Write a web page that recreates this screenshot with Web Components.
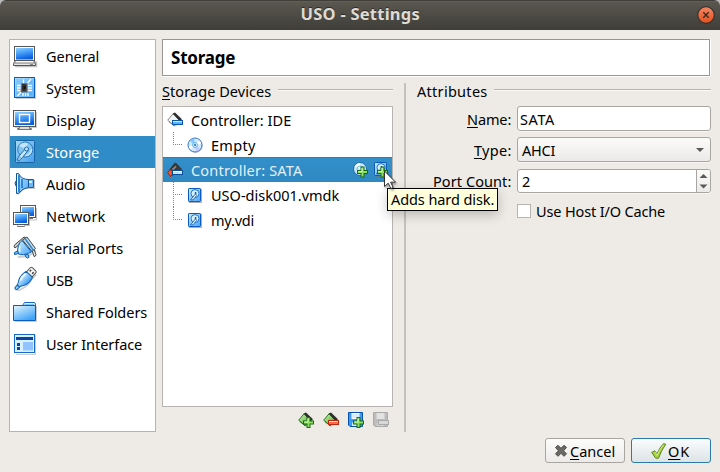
<!DOCTYPE html>
<html lang="en">
<head>
<meta charset="utf-8">
<title>USO - Settings</title>
<style>
html,body{margin:0;width:720px;height:472px;overflow:hidden}
body{background:#b9b9bb;font:14.5px "Noto Sans","Open Sans",sans-serif;color:#000}
</style>
</head>
<body>
<settings-window></settings-window>
<script>
const define = (name, html, connect) => {
  const t = document.createElement('template');
  t.innerHTML = html;
  customElements.define(name, class extends HTMLElement {
    constructor() { super(); this.attachShadow({mode: 'open'}).append(t.content.cloneNode(true)); }
    connectedCallback() { if (connect) connect.call(this, this.shadowRoot); }
  });
};

/* Shared pieces for the small icons */
const disk = (x, y, w, h) => `<rect x="${x+.5}" y="${y+.5}" width="${w-1}" height="${h-1}" rx=".6" fill="url(#sky)" stroke="#0c5cc0"/>`;
const plus = (x, y) => `<g transform="translate(${x} ${y})"><path d="M3.500 0h4v3.500h3.500v4H7.500V11h-4V7.500H0v-4h3.500z" fill="#176b12"/><path d="M4.500 1h2v3.500H10v2H6.500V10h-2V6.500H1v-2h3.500z" fill="#8fe060"/><path d="M5 1.500v3.500H1.500" fill="none" stroke="#e0ffc8"/></g>`;
const grads = `<defs>
<linearGradient id="scr" x2=".3" y2="1"><stop stop-color="#8fd0ff"/><stop offset=".45" stop-color="#4aa2f8"/><stop offset="1" stop-color="#0a5fe0"/></linearGradient>
<linearGradient id="sky" x2="1" y2="1"><stop stop-color="#c8ecff"/><stop offset="1" stop-color="#48a4f8"/></linearGradient>
<linearGradient id="fold" x2=".6" y2="1"><stop stop-color="#e6f8ff"/><stop offset="1" stop-color="#3fa4f7"/></linearGradient>
<linearGradient id="body" x2="1"><stop stop-color="#d9f3ff"/><stop offset="1" stop-color="#3b9cf3"/></linearGradient>
<linearGradient id="grn" x2="1" y2="1"><stop stop-color="#d0f8b0"/><stop offset="1" stop-color="#3f9b28"/></linearGradient></defs>`;
const card = (a, b) => `<path d="M1.500 10L8 15l7-6-6-4z" fill="#777" opacity=".35"/><path d="M.7 8.200L6 1.800 12.500 8.500 7 13.800z" fill="${a}" stroke="${b}"/><path d="M5.700 1.500L8 .5l7 6.800-2.300 2z" fill="#2e2e2e"/><path d="M2 9.500l5 3.800" stroke="${b}"/>`;
const bar = (y, s, f) => `<rect x="5.500" y="${y}" width="10" height="4" fill="${f}" stroke="${s}"/><path d="M6 ${y+1}h9" stroke="#fff" opacity=".75"/>`;
const smallHd = disk(1,1,13,14) + `<path d="M14.500 2v13.500H2" fill="none" stroke="#777" opacity=".6"/><circle cx="8" cy="6.600" r="4" fill="#d9f1ff" stroke="#2273c8"/><path d="M3.500 13L8.500 6.800l1.200 1.600-3.500 4.400z" fill="#e8f7ff" stroke="#1560b5" stroke-width=".9"/><circle cx="8.600" cy="6" r=".9" fill="#0750a5"/>`;
const ICONS = {
  general: [24, `<path d="M2.5 18h21v4.5H2" fill="none" stroke="#999" stroke-width="1.5" opacity=".6"/><rect x="1.5" y="2.5" width="20" height="14" fill="#fff" stroke="#555"/><rect x="3" y="4" width="17" height="11.5" fill="url(#scr)"/><path d="M2.5 16.5h18l2 3v2h-22v-2z" fill="#e8e8e8" stroke="#555"/><path d="M1 19h21" stroke="#777"/><path d="M3 17.7h17" stroke="#fff"/><path d="M17 20.5h3" stroke="#888"/>`],
  system: [24, `<path d="M3 22.500h19.500V3" stroke="#999" fill="none" opacity=".5"/><rect x="1.500" y="1.500" width="20" height="20" fill="url(#sky)" stroke="#0b5cc0"/><rect x="3" y="3" width="17" height="17" fill="#55abf8" fill-opacity=".5" stroke="#82caff" stroke-opacity=".7"/><g stroke="#fff" stroke-width="1.300"><path d="M4 9.500h4M4 12h4M4 14.500h4M15 9.500h4M15 12h4M15 14.500h4M10.500 3.500v4M10 17v3M12.500 17v3M15 17v3M14.500 7l3.500-4M8 16l-3.500 4"/></g><path d="M8.500 7.500h5.500v8.500H8z" fill="#333" stroke="#777"/><path d="M10.500 10h2v3h-2z" fill="#111"/>`],
  display: [24, `<path d="M2 19.500h21.500V4" fill="none" stroke="#999" opacity=".5"/><rect x=".500" y="2.500" width="22" height="16" fill="#f5f5f5" stroke="#555"/><rect x="2" y="4" width="19" height="13" fill="url(#scr)"/><rect x="6.500" y="6.500" width="10" height="8" fill="none" stroke="#fff" stroke-width="1.400"/><path d="M6.500 19v1.500h-2v1h14v-1h-2V19" fill="#ddd" stroke="#777"/>`],
  storage: [24, `<rect x="2.5" y=".5" width="19" height="22" rx="1" fill="url(#sky)" opacity=".8" stroke="#125b9c"/><circle cx="12.3" cy="9.500" r="7.600" fill="#83c4ef" stroke="#2b7bbd"/><path d="M6 6a7 7 0 0 1 9-2.500L12.500 9z" fill="#d3eefb" opacity=".8"/><path d="M18.500 9a6.500 6.500 0 0 1-6 6.500" fill="none" stroke="#c7e8fa" stroke-width="1.500"/><path d="M4 20l2-4 7-8 2 2.500-5.500 7L6 21z" fill="#c9e7f8" stroke="#1d6cac"/><circle cx="13.5" cy="9" r="2" fill="#c0e3f8" stroke="#1d6cac"/><circle cx="6.500" cy="18.500" r="1.500" fill="#a6d4f2" stroke="#3c86be" stroke-width=".6"/>`],
  audio: [24, `<path d="M5 22l6-6h10V8" fill="none" stroke="#999" stroke-width="2" opacity=".5"/><path d="M15 7.500h5.500v8H15z" fill="#6ab7f4" stroke="#185da3"/><path d="M3.500 1.500h2q3 6 10 6v8q-6 .5-10 6h-2z" fill="url(#sky)" stroke="#175695"/><path d="M6 3v17M9 7v9" stroke="#2f86d5" stroke-width="2"/><path d="M4.500 3v17" stroke="#d9f3ff"/><path d="M3 9q-2 2 0 5" fill="#5eb4f5" stroke="#175695"/><path d="M16 10h3" stroke="#d4f0ff" stroke-width="2"/>`],
  network: [24, `<path d="M9 16h14.500V4" fill="none" stroke="#999" opacity=".6"/><rect x="7.500" y="1.500" width="15" height="12" fill="#fff" stroke="#555"/><rect x="9" y="3" width="12" height="9" fill="url(#scr)"/><path d="M12 14.500h8" stroke="#777"/><rect x=".500" y="8.500" width="15" height="12" fill="#fff" stroke="#555"/><rect x="2" y="10" width="12" height="9" fill="url(#scr)"/><path d="M4.500 21.500v1h7v-1" fill="#eee" stroke="#777"/><path d="M16.500 10v11.500H12" fill="none" stroke="#999" opacity=".6"/>`],
  serial: [24, `<path d="M5 21l10-1 8-5" stroke="#999" fill="none" stroke-width="2" opacity=".5"/><path d="M1.500 9q-1 2 .5 3l11-9q0-2-2-2z" fill="#ccc" stroke="#444"/><path d="M19 14l2-.5 2 5q0 2-2 2z" fill="#eee" stroke="#444"/><path d="M9.500 4L14 1l8.500 11.500-3.500 3z" fill="#b8ddf4" stroke="#444"/><path d="M9 4.500q-5 4-4.500 13 5 3 14-1.500z" fill="url(#sky)" stroke="#105fb0"/><path d="M4.500 15l-3 1.500v2l4-1zM12 19l3-.7 1 3q-1.500 1.500-3 0z" fill="#74c1fb" stroke="#105fb0"/><path d="M12 2.500l8.500 12" stroke="#3f81b8" stroke-width="1.500"/><path d="M7 10q-1 3 0 6" stroke="#ecfaff" stroke-width="1.500" fill="none"/>`],
  usb: [24, `<path d="M5 22.500q11-4 14-12l4-4" stroke="#888" stroke-width="2" fill="none" opacity=".4"/><g transform="translate(11.500 11.500) rotate(43)"><path d="M-3.800-7v-5.500q0-1.500 1.500-1.500h4.600q1.500 0 1.500 1.500V-7z" fill="#f2f2f2" stroke="#555"/><path d="M-1.700-11.500v2M1.700-11.500v2" stroke="#333" stroke-width="1.400"/><path d="M-4.500-7h9q1.700 7-.8 11.500-1.700 2.500-2.200 4.500h-3q-.5-2-2.200-4.500-2.500-4.500-.8-11.500z" fill="url(#body)" stroke="#1463b3"/><path d="M-1.500 9h3v3.500q-1.500 1.500-3 0z" fill="#8fd0ff" stroke="#1463b3"/><path d="M-3-5q-1 5 .8 8.500" fill="none" stroke="#f4fcff" stroke-width="1.500"/></g>`],
  folder: [24, `<path d="M2 21.500h21.500V6" stroke="#999" fill="none" opacity=".5"/><path d="M9.500 5.500l2-3h10l1 1.500v4h-13z" fill="#d6f0ff" stroke="#1768c4"/><path d="M.5 5.500h22v15H.5z" fill="url(#fold)" stroke="#0d5cb8"/><path d="M11.500 4.500H21" stroke="#7ec4f5"/>`],
  ui: [24, `<path d="M3 22.500h19.500V3" stroke="#999" fill="none" opacity=".5"/><rect x="1.500" y="2.500" width="20" height="18" fill="#d9f0ff" stroke="#1768c8"/><path d="M3 5h17v3H3z" fill="#0a43a0"/><path d="M4 11h3v3H4zM4 15h3v3H4z" fill="#0a43a0"/><path d="M10 10h10v8.500H10z" fill="#91c4ff"/>`],
  ide: [16, card('#f3f3f3', '#8a8a8a') + bar(8.500, '#0c55ad', '#59b5fa')],
  sata: [16, `<path d="M2 8L7.500.8h1.500l6 6.200-2 3-8 4z" fill="#3c3c3c"/><path d="M4.500 6.500L8.500 3l2 2-5 5z" fill="#808080" stroke="#222"/><path d="M.7 10.500q1.500-3.500 4.500-2.500v4.500l-1.700 2z" fill="#f45a35" stroke="#a91b0b"/>` + bar(8.500, '#0c4c98', '#b9e4ff')],
  disc: [16, `<circle cx="8.7" cy="8.900" r="7" fill="#999" opacity=".5"/><circle cx="8" cy="8" r="7" fill="#cfeaff" stroke="#3674c8"/><path d="M8 8L3 4a6.500 6.500 0 0 1 4-2.500z" fill="#7fc9ff"/><path d="M8 8l5 4a6.500 6.500 0 0 1-4 2.500z" fill="#c3c4ff"/><path d="M8 8l4.500-4.500A6 6 0 0 1 14 7z" fill="#fff"/><path d="M8 8l-4.500 4.500A6 6 0 0 1 2 9z" fill="#fff"/><circle cx="8" cy="8" r="2.400" fill="#eaf6ff" stroke="#5aaee8"/><circle cx="8" cy="8" r=".9" fill="#075baa"/>`],
  hd: [16, smallHd],
  adddisc: [16, `<circle cx="7" cy="7" r="6.500" fill="#c8e9fb" stroke="#1c6aaf"/><path d="M7 7L2 4.500A6 6 0 0 1 7 1z" fill="#fff"/><circle cx="7" cy="7" r="3" fill="none" stroke="#67b7e7"/>` + plus(4, 4.500)],
  addhd: [16, `<g transform="translate(0 -1)">${smallHd}</g>` + plus(4, 4.500)],
  addctl: [16, card('url(#grn)', '#28751d') + plus(5, 5)],
  remctl: [16, card('url(#grn)', '#28751d') + bar(8.500, '#b92a13', '#ff6b48')],
  addatt: [16, `<path d="M.5.5h14v14H2l-1.500-1.500z" fill="#3a9af2" stroke="#0750aa"/><path d="M3.500 1h8v6h-8z" fill="#fff"/><path d="M4 10.500h7V14H4z" fill="#dcecff"/><path d="M4 3h7M4 5h7" stroke="#b9d9f4"/>` + plus(5, 5)],
  rematt: [16, `<path d="M.5.5h14v14H2l-1.500-1.500z" fill="#bcbcbc" stroke="#aaa"/><path d="M3.500 1h8v6h-8z" fill="#e2e2e2"/><path d="M4 10.500h7V14H4z" fill="#d4d4d4"/><rect x="5.500" y="8.500" width="10" height="4" fill="#d8d8d8" stroke="#aaa"/>`],
  cancel: [16, `<path d="M2.500 4.500L5 2.300l3 3 3-3 2.500 2.200-3 3.300 3 3-2.500 2.500-3-3-3 3-2.500-2.500 3-3z" fill="#6a6a66" stroke="#4b4b48" stroke-linejoin="round"/>`],
  ok: [16, `<path d="M.7 9.500l3-1.700 2.300 3Q8.500 4.500 12.500.7l2.300.5Q10.500 7 7.500 15.200H4.700z" fill="#a5d13f" stroke="#5f8626" stroke-linejoin="round"/><path d="M4 9l2 3.500Q8.500 6 12.500 2" fill="none" stroke="#cdec79"/>`]
};

define('px-icon', `<style>:host{display:block;flex:none}svg{display:block;overflow:visible}</style>`, function (root) {
  const [s, body] = ICONS[this.getAttribute('name')];
  root.innerHTML += `<svg width="${s}" height="${s}" viewBox="0 0 ${s} ${s}">${grads}${body}</svg>`;
});

/* Label that spaces its letters evenly over the width given in "w" */
define('fit-text', `<style>:host{display:block;white-space:nowrap;flex:none;line-height:20px}span{display:inline-block}::slotted(u){text-decoration:underline;text-decoration-thickness:1px;text-underline-offset:2px;text-decoration-skip-ink:none}</style><span><slot></slot></span>`, function (root) {
  const w = +this.getAttribute('w'), span = root.querySelector('span');
  const natural = span.getBoundingClientRect().width, n = this.textContent.length;
  this.style.width = w + 'px';
  if (n > 1) span.style.letterSpacing = ((w + .3 - natural) / (n - 1)) + 'px';
});

define('title-bar', `<style>:host{display:grid;grid-template-columns:1fr 119px 1fr;height:30px;align-items:center;background:linear-gradient(#3f3e39,#3f3e39 1px,#68655c 1px,#5a574f 2px,#3e3d38);border-radius:6px 6px 0 0;color:#dfdbd2;font-weight:700;font-size:16.5px;text-shadow:0 -1px #2b2a27}
fit-text{grid-column:2;padding-bottom:2px}svg{justify-self:end;margin-right:5px}</style>
<fit-text w="119">USO - Settings</fit-text><svg width="18" height="18" viewBox="0 0 18 18"><defs><linearGradient id="o" x2="0" y2="1"><stop stop-color="#f58562"/><stop offset="1" stop-color="#e4511f"/></linearGradient></defs><circle cx="9" cy="9" r="8.300" fill="url(#o)" stroke="#34332e" stroke-width="1.200"/><path d="M6.300 6.300l5.400 5.400M11.700 6.300l-5.400 5.400" stroke="#3b2a20" stroke-width="1.400"/></svg>`);

define('nav-item', `<style>:host{display:flex;align-items:center;height:32px;padding-left:3px;gap:9px}:host([selected]){background:#308cc6;color:#fff}</style><slot name="icon"></slot><slot></slot>`, function () {
  const icon = document.createElement('px-icon');
  icon.slot = 'icon';
  icon.setAttribute('name', this.getAttribute('icon'));
  this.prepend(icon);
});

define('side-nav', `<style>:host{display:block;box-sizing:border-box;width:147px;height:393px;background:#fff;border:1px solid #b6b3b0}</style>
<nav-item icon="general"><fit-text w="53">General</fit-text></nav-item>
<nav-item icon="system"><fit-text w="49">System</fit-text></nav-item>
<nav-item icon="display"><fit-text w="49">Display</fit-text></nav-item>
<nav-item icon="storage" selected><fit-text w="53">Storage</fit-text></nav-item>
<nav-item icon="audio"><fit-text w="39">Audio</fit-text></nav-item>
<nav-item icon="network"><fit-text w="59">Network</fit-text></nav-item>
<nav-item icon="serial"><fit-text w="77">Serial Ports</fit-text></nav-item>
<nav-item icon="usb"><fit-text w="27">USB</fit-text></nav-item>
<nav-item icon="folder"><fit-text w="101">Shared Folders</fit-text></nav-item>
<nav-item icon="ui"><fit-text w="96">User Interface</fit-text></nav-item>`);

define('group-title', `<style>:host{display:flex;align-items:center;gap:7px;height:20px}i{flex:1;height:1px;background:#b6b3b0;border-bottom:1px solid #faf9f8;margin-bottom:3px}</style><slot></slot><i></i>`);

define('tree-row', `<style>:host{display:flex;box-sizing:border-box;align-items:center;height:25px;padding:0 3px 0 4px}:host([child]){padding-left:0}:host([selected]){background:linear-gradient(#2a7fb5 1px,#338fca 1px,#2f88c1);color:#e3f0f8}
.lead{display:none;width:24px;height:25px}:host([child]) .lead{display:block}::slotted(fit-text){margin-left:8px}::slotted([slot=end]){margin-left:4px}.sp{flex:1}</style>
<svg class="lead"><path fill="none" stroke="#888" stroke-dasharray="1 1"/></svg><slot name="icon"></slot><slot></slot><span class="sp"></span><slot name="end"></slot>`, function (root) {
  root.querySelector('path').setAttribute('d', this.hasAttribute('more') ? 'M10.5 0v25M10 12.5h10' : 'M10.5 0v12M10 12.5h10');
});

define('device-tree', `<style>:host{display:block;box-sizing:border-box;width:231px;height:301px;background:#fff;border:1px solid #b6b3b0}</style>
<tree-row><px-icon slot="icon" name="ide"></px-icon><fit-text w="100">Controller: IDE</fit-text></tree-row>
<tree-row child><px-icon slot="icon" name="disc"></px-icon><fit-text w="44">Empty</fit-text></tree-row>
<tree-row selected><px-icon slot="icon" name="sata"></px-icon><fit-text w="111">Controller: SATA</fit-text><px-icon slot="end" name="adddisc"></px-icon><px-icon slot="end" name="addhd"></px-icon></tree-row>
<tree-row child more><px-icon slot="icon" name="hd"></px-icon><fit-text w="128">USO-disk001.vmdk</fit-text></tree-row>
<tree-row child><px-icon slot="icon" name="hd"></px-icon><fit-text w="43">my.vdi</fit-text></tree-row>`);

define('tool-strip', `<style>:host{display:flex;justify-content:flex-end;gap:9px;padding:5px 4px 0 0}</style>
<px-icon name="addctl"></px-icon><px-icon name="remctl"></px-icon><px-icon name="addatt"></px-icon><px-icon name="rematt"></px-icon>`);

define('form-field', `<style>:host{display:flex;box-sizing:border-box;align-items:center;width:194px;height:25px;background:#fff;border:1px solid #a9a6a2;border-radius:3px;padding-left:2px;box-shadow:0 1px #f7f6f4}
:host([kind=combo]){background:linear-gradient(#fbfbfa,#eceae8);padding-left:4px}:host([kind=spin]){height:24px;padding-left:4px}
span{flex:1}svg{display:none;flex:none}:host([kind=combo]) .c,:host([kind=spin]) .s{display:block}.c{margin-right:6px}.s{background:linear-gradient(#fbfbfa,#eceae8);border-left:1px solid #a9a6a2;border-radius:0 2px 2px 0}</style>
<slot></slot><span></span><svg class="c" width="8" height="4"><path d="M0 0h8L4 4z" fill="#5a5a58"/></svg><svg class="s" width="13" height="22"><path d="M2.500 8L6.500 4l4 4zM2.500 14.500L6.500 18.500l4-4z" fill="#5a5a58"/></svg>`);

define('attribute-form', `<style>:host{display:grid;grid-template-columns:94px 194px;column-gap:6px;grid-template-rows:25px 25px 24px 14px;padding-top:5px;align-items:center}
.l{justify-self:end}.b{margin-top:0}:host{row-gap:0;grid-template-rows:25px 6px 25px 7px 24px 11px 14px}
.r1{grid-row:1}.r2{grid-row:3}.r3{grid-row:5}.k{grid-row:7;grid-column:2;display:flex;align-items:center;gap:5px;height:14px}.k i{box-sizing:border-box;width:14px;height:14px;border:1px solid #b6b3b0;background:#fff}</style>
<fit-text class="l r1" w="44"><u>N</u>ame:</fit-text><form-field class="r1"><fit-text w="34">SATA</fit-text></form-field>
<fit-text class="l r2" w="37"><u>T</u>ype:</fit-text><form-field class="r2" kind="combo"><fit-text w="33">AHCI</fit-text></form-field>
<fit-text class="l r3" w="78">Port Count:</fit-text><form-field class="r3" kind="spin"><fit-text w="8">2</fit-text></form-field>
<div class="k"><i></i><fit-text w="129">Use Host I/O Cache</fit-text></div>`);

define('push-button', `<style>:host{display:flex;box-sizing:border-box;align-items:center;justify-content:center;gap:1px;width:80px;height:25px;padding-right:2px;border:1px solid #a9a6a2;border-radius:3px;background:linear-gradient(#fcfcfb,#edebe9)}:host([default]){border-color:#2a7ba8;background:linear-gradient(#fbfcfd,#dde3e6)}</style><slot></slot>`);

define('tool-tip', `<style>:host{display:block;box-sizing:border-box;width:111px;height:23px;border:1px solid #000;background:#ffffdc;padding:0 0 0 3px;box-shadow:0 4px 12px rgba(0,0,0,.22)}</style><slot></slot>`);

define('settings-window', `<style>:host{display:flex;flex-direction:column;width:720px;height:472px;position:relative}
main{flex:1;display:grid;grid-template-columns:147px 549px;grid-template-rows:393px 25px;column-gap:6px;row-gap:6px;padding:9px;background:#eeebe6;box-sizing:border-box}
.page{display:grid;grid-template-rows:37px 351px;row-gap:5px;width:549px}
header{box-sizing:border-box;width:548px;border:1px solid #989693;box-shadow:0 1px #fff,1px 0 #fff;background:#fff;display:flex;align-items:center;padding-left:8px;font-size:17px;font-weight:700}
.cols{display:grid;grid-template-columns:231px 2px 294px;column-gap:11px}.split{background:#c4c1bd;margin-top:2px}
.left group-title{margin-bottom:5px}.right group-title{margin-bottom:0}
footer{grid-column:1/3;display:flex;justify-content:flex-end;gap:6px}
tool-tip{position:absolute;left:387px;top:188px}.cursor{position:absolute;left:384px;top:170px;filter:drop-shadow(1px 2px 1px rgba(0,0,0,.35))}</style>
<title-bar></title-bar>
<main><side-nav></side-nav>
<div class="page"><header><fit-text w="64">Storage</fit-text></header>
<div class="cols"><div class="left"><group-title><fit-text w="109"><u>S</u>torage Devices</fit-text></group-title><device-tree></device-tree><tool-strip></tool-strip></div>
<div class="split"></div>
<div class="right"><group-title><fit-text w="70">Attributes</fit-text></group-title><attribute-form></attribute-form></div></div></div>
<footer><push-button><px-icon name="cancel"></px-icon><fit-text w="45"><u>C</u>ancel</fit-text></push-button><push-button default><px-icon name="ok"></px-icon><fit-text w="21"><u>O</u>K</fit-text></push-button></footer></main>
<tool-tip><fit-text w="103">Adds hard disk.</fit-text></tool-tip>
<svg class="cursor" width="13" height="20"><path d="M.5 1v15.500l3.700-3.300 2.700 5.300 2.300-1-2.600-5.300h5z" fill="#fff" stroke="#333"/></svg>`);
</script>
</body>
</html>
